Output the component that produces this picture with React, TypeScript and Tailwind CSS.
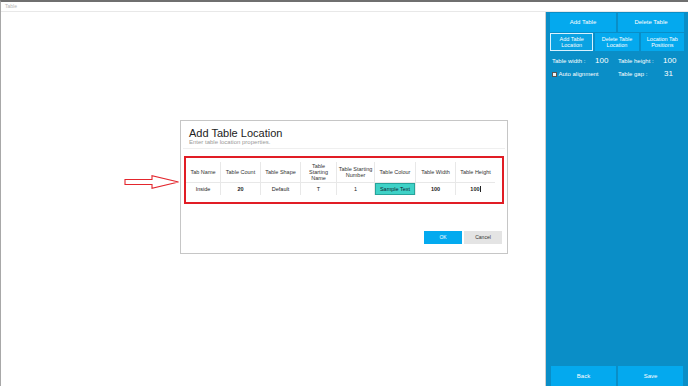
import React from "react";

const cols = [
  { w: 35, h: ["Tab Name"], v: "Inside" },
  { w: 40, h: ["Table Count"], v: "20", b: true },
  { w: 40, h: ["Table Shape"], v: "Default" },
  { w: 36, h: ["Table", "Starting", "Name"], v: "T" },
  { w: 38, h: ["Table Starting", "Number"], v: "1" },
  { w: 41, h: ["Table Colour"], v: "Sample Text", teal: true },
  { w: 40, h: ["Table Width"], v: "100", b: true },
  { w: 39, h: ["Table Height"], v: "100", b: true, caret: true },
];

export default function App() {
  return (
    <div className="w-[688px] h-[386px] flex flex-col bg-white border-t-2 border-t-[#6f6f6f] border-l border-l-[#a8a8a8] overflow-hidden font-['Liberation_Sans',Arial,sans-serif]">
      <div className="h-[10px] border-b border-b-[#e8e8e8] flex items-center pl-[4px] text-[5px] leading-[5px] text-[#b4b4b4]">
        Table
      </div>
      <div className="flex-1 flex min-h-0">
        <div className="flex-1 flex items-start pt-[108px] pl-[123px]">
          <svg width="56" height="14" viewBox="0 0 56 14" className="mt-[55px] shrink-0">
            <polygon
              points="1,4.5 28,4.5 28,0.7 54.5,7 28,13.3 28,9.5 1,9.5"
              fill="#fff"
              stroke="#e3262d"
              strokeWidth="1.1"
            />
          </svg>
          <div className="w-[328px] h-[134px] border border-[#c6c6c6] bg-white flex flex-col">
            <div className="pl-[6px] pt-[6px] mx-[2px] pb-[2px] border-b border-b-[#efefef]">
              <div className="text-[11px] leading-[12px] text-[#222]">Add Table Location</div>
              <div className="text-[6px] leading-[7px] text-[#9a9a9a]">Enter table location properties.</div>
            </div>
            <div className="ml-[3px] mt-[7px] w-[320px] border-2 border-[#e11d25] pt-[4px] pb-[7px]">
              <div className="flex">
                {cols.map((c, i) => (
                  <div
                    key={i}
                    className={`flex flex-col ${i < cols.length - 1 ? "border-r border-r-[#e8e8e8]" : ""}`}
                    style={{ width: c.w }}
                  >
                    <div className="h-[21px] flex flex-col items-center justify-center text-[5.5px] leading-[6px] text-[#333] text-center border-b border-b-[#e8e8e8]">
                      {c.h.map((t, j) => (
                        <div key={j}>{t}</div>
                      ))}
                    </div>
                    <div className="h-[12px] flex items-center justify-center text-[5.5px] text-[#222]">
                      {c.teal ? (
                        <div className="w-full h-[12px] bg-[#3fd2c7] border border-[#27a49b] flex items-center justify-center text-[#123]">
                          {c.v}
                        </div>
                      ) : (
                        <span className={c.b ? "font-bold" : ""}>
                          {c.v}
                          {c.caret ? <span className="inline-block w-[0.6px] h-[6px] bg-[#222] align-middle ml-[0.5px]" /> : null}
                        </span>
                      )}
                    </div>
                  </div>
                ))}
              </div>
            </div>
            <div className="flex justify-end gap-[2px] pr-[5px] mt-[27px]">
              <div className="w-[38px] h-[13px] bg-[#03aaef] text-white text-[5px] flex items-center justify-center">OK</div>
              <div className="w-[38px] h-[13px] bg-[#e4e4e4] text-[#333] text-[5px] flex items-center justify-center">Cancel</div>
            </div>
          </div>
        </div>
        <div className="w-[143px] border-l border-l-[#cfcfcf] bg-[#0a8ec7] flex flex-col px-[4px] text-white">
          <div className="grid grid-cols-2 gap-[2px] mt-[1px] h-[19px]">
            <div className="bg-[#04a9ee] flex items-center justify-center text-[6px]">Add Table</div>
            <div className="bg-[#04a9ee] flex items-center justify-center text-[6px]">Delete Table</div>
          </div>
          <div className="grid grid-cols-3 gap-[2px] mt-[1px] h-[18px]">
            <div className="bg-[#0aa2e2] border border-[#d8f2ff] flex items-center justify-center text-center text-[5.5px] leading-[6px]">Add Table<br />Location</div>
            <div className="bg-[#04a9ee] flex items-center justify-center text-center text-[5.5px] leading-[6px]">Delete Table<br />Location</div>
            <div className="bg-[#04a9ee] flex items-center justify-center text-center text-[5.5px] leading-[6px]">Location Tab<br />Positions</div>
          </div>
          <div className="grid grid-cols-2 mt-[4px] h-[10px] items-center">
            <div className="flex items-center pl-[2px]">
              <span className="text-[6px] w-[43px]">Table width :</span>
              <span className="text-[8px]">100</span>
            </div>
            <div className="flex items-center pl-[1px]">
              <span className="text-[6px] w-[45px]">Table height :</span>
              <span className="text-[8px]">100</span>
            </div>
          </div>
          <div className="grid grid-cols-2 mt-[3px] h-[10px] items-center">
            <div className="flex items-center pl-[2px]">
              <span className="w-[5px] h-[5px] bg-[#f2f2f2] border-[0.6px] border-[#555] mr-[1.5px] shrink-0" />
              <span className="text-[6px]">Auto alignment</span>
            </div>
            <div className="flex items-center pl-[1px]">
              <span className="text-[6px] w-[46px]">Table gap :</span>
              <span className="text-[8px]">31</span>
            </div>
          </div>
          <div className="flex-1" />
          <div className="grid grid-cols-2 gap-[2px] h-[20px] pl-[1px] pr-[1px]">
            <div className="bg-[#04a9ee] flex items-center justify-center text-[6px]">Back</div>
            <div className="bg-[#04a9ee] flex items-center justify-center text-[6px]">Save</div>
          </div>
        </div>
      </div>
    </div>
  );
}
